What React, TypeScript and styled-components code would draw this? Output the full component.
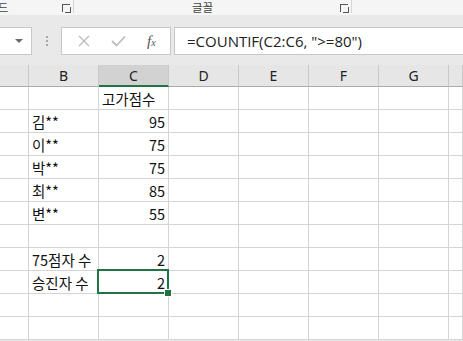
import styled, { createGlobalStyle } from 'styled-components';

const GlobalStyle = createGlobalStyle`
  html, body {
    margin: 0;
    padding: 0;
    background: #ffffff;
    overflow: hidden;
  }
  * {
    box-sizing: border-box;
  }
`;

const COLS = ['', 'B', 'C', 'D', 'E', 'F', 'G', ''];
const ROWS: [string, string][] = [
  ['', '고가점수'],
  ['김**', '95'],
  ['이**', '75'],
  ['박**', '75'],
  ['최**', '85'],
  ['변**', '55'],
  ['', ''],
  ['75점자 수', '2'],
  ['승진자 수', '2'],
  ['', ''],
  ['', ''],
];
const ACTIVE_ROW = 8;

const App = () => {
  return (
    <Sheet>
      <GlobalStyle />
      <Ribbon>
        <RibbonGroup $width={74}>
          <GroupLabel $offset={-34}>클립보드</GroupLabel>
          <Launcher />
        </RibbonGroup>
        <RibbonGroup $width={278}>
          <GroupLabel $offset={118}>글꼴</GroupLabel>
          <Launcher />
        </RibbonGroup>
      </Ribbon>
      <FormulaBar>
        <NameBox>
          <svg width="8" height="5" viewBox="0 0 8 5">
            <path d="M0 0 L8 0 L4 4 Z" fill="#6a6a6a" />
          </svg>
        </NameBox>
        <Grip>
          <span />
          <span />
          <span />
        </Grip>
        <ButtonBox>
          <svg width="12" height="12" viewBox="0 0 12 12">
            <path d="M1 1 L11 11 M11 1 L1 11" stroke="#bdbdbd" strokeWidth="1.4" fill="none" />
          </svg>
          <svg width="15" height="12" viewBox="0 0 15 12">
            <path d="M1 6 L5.5 10.5 L14 1.5" stroke="#bdbdbd" strokeWidth="1.8" fill="none" />
          </svg>
          <FxLabel>
            f<sub>x</sub>
          </FxLabel>
        </ButtonBox>
        <FormulaInput>=COUNTIF(C2:C6, "&gt;=80")</FormulaInput>
      </FormulaBar>
      <Grid>
        {COLS.map((c, i) => (
          <ColHeader key={`h${i}`} $active={c === 'C'}>
            {c}
          </ColHeader>
        ))}
        {ROWS.map(([b, c], r) => (
          <Row key={r}>
            <Cell />
            <Cell>{b}</Cell>
            <Cell $align={r === 0 ? 'left' : 'right'} $active={r === ACTIVE_ROW}>
              {c}
              {r === ACTIVE_ROW && <FillHandle />}
            </Cell>
            <Cell />
            <Cell />
            <Cell />
            <Cell />
            <Cell />
          </Row>
        ))}
      </Grid>
    </Sheet>
  );
};

const Sheet = styled.div`
  width: 463px;
  height: 341px;
  overflow: hidden;
  background: #e9e9e9;
  font-family: 'Noto Sans CJK KR', 'Noto Sans', sans-serif;
`;

const Ribbon = styled.div`
  display: flex;
  height: 15px;
  background: #f5f5f5;
  overflow: hidden;
`;

const RibbonGroup = styled.div<{ $width: number }>`
  position: relative;
  display: flex;
  align-items: center;
  justify-content: flex-end;
  flex-shrink: 0;
  width: ${({ $width }) => $width}px;
  height: 13px;
  padding-right: 3px;
  border-right: 1px solid #d6d6d6;
`;

const GroupLabel = styled.span<{ $offset: number }>`
  position: absolute;
  left: ${({ $offset }) => $offset}px;
  top: 0;
  font-size: 11.5px;
  line-height: 14px;
  color: #444444;
  white-space: nowrap;
`;

const Launcher = styled.span`
  position: relative;
  width: 8px;
  height: 8px;
  border-left: 1px solid #555;
  border-top: 1px solid #555;
  margin-top: 2px;
  &::after {
    content: '';
    position: absolute;
    left: 2px;
    top: 2px;
    width: 5px;
    height: 5px;
    border-right: 1px solid #555;
    border-bottom: 1px solid #555;
  }
`;

const FormulaBar = styled.div`
  display: flex;
  align-items: stretch;
  height: 28px;
  margin-top: 12px;
`;

const Box = styled.div`
  flex-shrink: 0;
  background: #ffffff;
  border: 1px solid #c8c8c8;
`;

const NameBox = styled(Box)`
  display: flex;
  align-items: center;
  justify-content: flex-end;
  width: 33px;
  margin-left: -1px;
  padding-right: 8px;
`;

const Grip = styled.div`
  display: flex;
  flex-direction: column;
  align-items: center;
  justify-content: center;
  gap: 2px;
  width: 29px;
  flex-shrink: 0;
  span {
    width: 2px;
    height: 2px;
    background: #a8a8a8;
  }
`;

const ButtonBox = styled(Box)`
  display: flex;
  align-items: center;
  justify-content: space-around;
  width: 110px;
  padding: 0 4px 0 6px;
`;

const FxLabel = styled.span`
  font-family: 'Liberation Serif', serif;
  font-style: italic;
  font-size: 15px;
  color: #555555;
  sub {
    font-size: 10px;
    vertical-align: 0;
  }
`;

const FormulaInput = styled(Box)`
  flex: 1 0 auto;
  margin-left: 3px;
  margin-right: -2px;
  padding-left: 12px;
  font-family: 'Open Sans', 'Noto Sans', sans-serif;
  font-size: 15px;
  line-height: 26px;
  color: #222222;
  white-space: nowrap;
`;

const Grid = styled.div`
  display: grid;
  grid-template-columns: 29px repeat(6, 70px) 1fr;
  margin-top: 10px;
`;

const ColHeader = styled.div<{ $active?: boolean }>`
  display: flex;
  align-items: center;
  justify-content: center;
  height: 22px;
  background: ${({ $active }) => ($active ? '#d2d2d2' : '#e6e6e6')};
  border-right: 1px solid #c9c9c9;
  border-bottom: ${({ $active }) => ($active ? '2px solid #217346' : '1px solid #ababab')};
  padding-top: ${({ $active }) => ($active ? '1px' : '0')};
  font-family: 'Noto Sans', sans-serif;
  font-size: 14px;
  color: #222222;
`;

const Row = styled.div`
  display: contents;
`;

const Cell = styled.div<{ $align?: 'left' | 'right'; $active?: boolean }>`
  position: relative;
  display: flex;
  align-items: center;
  justify-content: ${({ $align }) => ($align === 'right' ? 'flex-end' : 'flex-start')};
  height: 23px;
  padding: 1px 3px 0 3px;
  background: #ffffff;
  border-right: 1px solid #d4d4d4;
  border-bottom: 1px solid #d4d4d4;
  font-size: 14.5px;
  color: #111111;
  white-space: nowrap;
  &::after {
    content: '';
    display: ${({ $active }) => ($active ? 'block' : 'none')};
    position: absolute;
    left: -2px;
    top: -2px;
    right: -1px;
    bottom: -1px;
    border: 2px solid #217346;
    pointer-events: none;
  }
`;

const FillHandle = styled.span`
  position: absolute;
  right: -3px;
  bottom: -3px;
  width: 6px;
  height: 6px;
  background: #217346;
  outline: 1px solid #ffffff;
  z-index: 2;
`;

export default App;
